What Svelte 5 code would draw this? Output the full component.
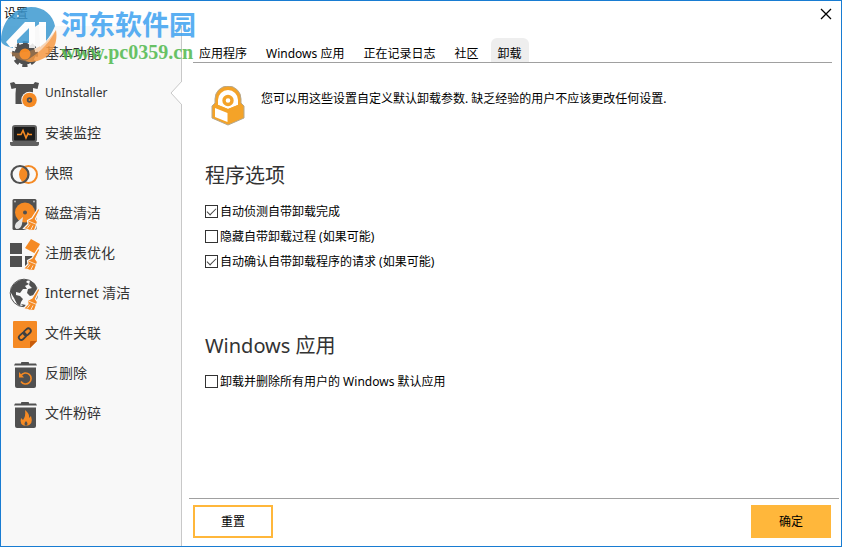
<script lang="ts">
  const sections = [
    { id: 'basic', label: '基本功能' },
    { id: 'uninstaller', label: 'UnInstaller' },
    { id: 'monitor', label: '安装监控' },
    { id: 'snapshot', label: '快照' },
    { id: 'disk', label: '磁盘清洁' },
    { id: 'registry', label: '注册表优化' },
    { id: 'internet', label: 'Internet 清洁' },
    { id: 'files', label: '文件关联' },
    { id: 'undelete', label: '反删除' },
    { id: 'shredder', label: '文件粉碎' },
  ]

  const tabs = ['应用程序', 'Windows 应用', '正在记录日志', '社区', '卸载']

  const defaults = {
    detect: true,
    hide: false,
    confirm: true,
    allUsers: false,
  }

  let section = $state('uninstaller')
  let tab = $state('卸载')
  let options = $state({ ...defaults })

  function reset() {
    options = { ...defaults }
  }
</script>

{#snippet broom()}
  <path
    d="M30 15.5 32 16.5 27.5 26 29.5 29 26.5 37.5 21 37 15.5 35.5 20 31 19.5 27.5 24 25Z"
    fill="#f58a24"
    stroke="#f8f8f8"
    stroke-width="1.2"
  />
  <path d="M20.5 28 28.5 31.5M19 35.5 22 31.5M23 36.5 25 32.5" stroke="#f8f8f8" stroke-width="0.8" />
{/snippet}

{#snippet icon(id: string)}
  <svg class="icon" viewBox="0 0 32 40" fill="none" aria-hidden="true">
    {#if id === 'basic'}
      <circle cx="17" cy="21" r="6.5" stroke="#505050" stroke-width="8" />
      <circle cx="17" cy="21" r="11" stroke="#505050" stroke-width="4" stroke-dasharray="5 3.64" stroke-dashoffset="2.5" />
      <circle cx="17" cy="21" r="5.5" fill="#f58a24" />
    {:else if id === 'uninstaller'}
      <path d="M2 10 6 9 7.5 11H25.5L27 9 31 10 29.5 16 25 15H8L3.5 16Z" fill="#505050" />
      <path d="M8 14.5H25V21L18 31H7.5V21Z" fill="#505050" />
      <circle cx="21.5" cy="27" r="8.3" fill="#f8f8f8" />
      <circle cx="21.5" cy="27" r="7.3" fill="#f58a24" />
      <circle cx="21.5" cy="27" r="1.8" fill="#f58a24" stroke="#505050" stroke-width="1.8" />
    {:else if id === 'monitor'}
      <rect x="5" y="13" width="23" height="15.5" rx="2" fill="#1c1c1c" stroke="#606060" stroke-width="2" />
      <path d="M2 29H31V31Q31 33 28 33H5Q2 33 2 31Z" fill="#606060" />
      <path d="M9 21.5H13L15 17.5 18 25 20 20.5 21 21.5H24" stroke="#f58a24" stroke-width="1.6" />
    {:else if id === 'snapshot'}
      <circle cx="20.5" cy="21.5" r="8.5" stroke="#f58a24" stroke-width="2" />
      <path d="M16.2 14.2A8.5 8.5 0 0 1 16.2 28.8 8.5 8.5 0 0 1 16.2 14.2Z" fill="#f58a24" />
      <circle cx="12" cy="21.5" r="8.5" stroke="#505050" stroke-width="2.2" />
    {:else if id === 'disk'}
      <rect x="4.5" y="6" width="24" height="31" rx="1.5" fill="#505050" />
      <circle cx="17" cy="19.5" r="10" fill="#f58a24" />
      <circle cx="17" cy="19.5" r="2" fill="#505050" />
      <path d="M15 24 14 31Q13 36 8.5 36 5.5 34 8 30Z" fill="#e4e4e4" />
      <circle cx="7" cy="8.5" r="0.9" fill="#c8c8c8" />
      <circle cx="26" cy="8.5" r="0.9" fill="#c8c8c8" />
      {@render broom()}
    {:else if id === 'registry'}
      <path d="M2 10H14V21H2ZM2 23H14V34H2ZM17 23H28V34H17Z" fill="#505050" />
      <path d="M23 6 32 11 27 20.5 17 15Z" fill="#f58a24" />
      {@render broom()}
    {:else if id === 'internet'}
      <circle cx="16" cy="20" r="13.8" fill="#f8f8f8" stroke="#505050" stroke-width="1" />
      <path d="M5 12 10 8 14 6.5 20 7 18 9 21 11 17 13 19 16 15 16 12 20 8 19 8 22 12 23 15 26 13 29 12 33 9 31 6 25 3 20 3 16Z" fill="#505050" />
      <path d="M22 7.5 27 11 29 16 30 21 28 26 26 22 22 23 19 20 20 16 24 15 21 12ZM13 31 18 32 16 34Z" fill="#505050" />
      {@render broom()}
    {:else if id === 'files'}
      <path d="M6 8H28Q29 8 29 9V28L22 35H6Q5 35 5 34V9Q5 8 6 8Z" fill="#f58a24" />
      <path d="M22 35V29Q22 28 23 28H29Z" fill="#c75c0b" />
      <g stroke="#404040" stroke-width="1.8" transform="rotate(-43 17 21)">
        <rect x="9.5" y="18.5" width="8" height="5" rx="2.5" />
        <rect x="16" y="18.5" width="8" height="5" rx="2.5" />
      </g>
    {:else}
      <path d="M13 9.5Q13 9 14 9H20Q21 9 21 9.5V10.5H28L29 12.5H6L7 10.5H13Z" fill="#505050" />
      <path d="M7 14.5H28V33Q28 35 26 35H9Q7 35 7 33Z" fill="#505050" />
      {#if id === 'undelete'}
        <path d="M13 22.5A5.5 5.5 0 1 1 13 28.5" stroke="#f58a24" stroke-width="1.6" />
        <path d="M11 19V24.5H16Z" fill="#f58a24" />
      {:else}
        <path d="M17 17Q22 21 21 25L23 23Q26 32 18 33 11 32 13 25L15 27Q18 23 17 17Z" fill="#f58a24" />
        <path d="M18 28Q21 31 18 33 15 31 18 28Z" fill="#505050" />
      {/if}
    {/if}
  </svg>
{/snippet}

<div class="window">
  <header class="titlebar">
    <span>设置</span>
    <button class="close" aria-label="关闭">
      <svg viewBox="0 0 12 12" aria-hidden="true">
        <path d="M1 1 11 11M11 1 1 11" stroke="#000" stroke-width="1.3" />
      </svg>
    </button>
  </header>

  <div class="body">
    <nav class="sidebar">
      {#each sections as item (item.id)}
        <button
          class="section"
          aria-current={section === item.id ? 'page' : undefined}
          onclick={() => (section = item.id)}
        >
          {@render icon(item.id)}
          <span>{item.label}</span>
          {#if section === item.id}
            <svg class="notch" viewBox="0 0 12 24" aria-hidden="true">
              <path d="M12 0 1 12 12 24" fill="#fff" stroke="#c8c8c8" />
            </svg>
          {/if}
        </button>
      {/each}
    </nav>

    <main>
      <div class="tabs" role="tablist">
        {#each tabs as name (name)}
          <button
            class="tab"
            class:active={tab === name}
            role="tab"
            aria-selected={tab === name}
            onclick={() => (tab = name)}
          >
            {name}
          </button>
        {/each}
      </div>

      <div class="panel">
        <div class="intro">
          <svg class="box-icon" viewBox="0 0 34 40" aria-hidden="true">
            <path d="M4 17V13A12 12 0 0 1 30 13V17L33 20V32L17 39 1 32V20Z" fill="#f4a328" stroke="#b5a78c" />
            <path d="M7 19V14A10 10 0 0 1 27 14V19L17 23Z" fill="#fff" />
            <circle cx="17" cy="14.5" r="4" fill="none" stroke="#f4a328" stroke-width="3.4" />
            <path d="M5 18 17 23 29 18 30 20 17 26 4 20Z" fill="#f4a328" />
            <path d="M4 22 16.5 27V36L4 31Z" fill="#fff" />
          </svg>
          <p>您可以用这些设置自定义默认卸载参数. 缺乏经验的用户不应该更改任何设置.</p>
        </div>

        <section>
          <h2>程序选项</h2>
          <label><input type="checkbox" bind:checked={options.detect} />自动侦测自带卸载完成</label>
          <label><input type="checkbox" bind:checked={options.hide} />隐藏自带卸载过程 (如果可能)</label>
          <label><input type="checkbox" bind:checked={options.confirm} />自动确认自带卸载程序的请求 (如果可能)</label>
        </section>

        <section>
          <h2>Windows 应用</h2>
          <label><input type="checkbox" bind:checked={options.allUsers} />卸载并删除所有用户的 Windows 默认应用</label>
        </section>
      </div>

      <footer>
        <button class="action outline" onclick={reset}>重置</button>
        <button class="action">确定</button>
      </footer>
    </main>
  </div>

  <div class="watermark">
    <svg viewBox="0 0 56 58" aria-hidden="true">
      <path d="M0 34C1 14 14 1 30 1 43 1 52 9 54 20 50 29 46 35 40 40V17L29 24V37H12V42C4 40 0 38 0 34Z" fill="#3d99d1" />
      <path d="M55 24C58 42 46 56 28 56L24 55C34 50 47 40 55 24Z" fill="#f69a45" />
      <path d="M9 46C27 49 43 42 55 24 51 41 40 51 24 55 18 54 12 51 9 46Z" fill="#f69a45" opacity="0.45" />
      <path d="M5 36 24 16H34V42H28V22L16 34V41H9ZM38 16H45V36L39 41Z" fill="#fff" />
      <circle cx="17" cy="10" r="1" fill="#fff" />
    </svg>
    <div class="site">
      <strong>河东软件园</strong>
      <span>www.pc0359.cn</span>
    </div>
  </div>
</div>

<style>
  :global(body) {
    margin: 0;
  }

  .window {
    position: relative;
    display: flex;
    flex-direction: column;
    box-sizing: border-box;
    min-height: 100vh;
    border: 1px solid #187cd2;
    background: #fff;
    color: #000;
    font: 12px/16px 'Noto Sans', 'Noto Sans CJK SC', sans-serif;
  }

  button {
    padding: 0;
    border: 0;
    background: none;
    color: inherit;
    font: inherit;
    cursor: pointer;
  }

  .titlebar {
    display: flex;
    justify-content: space-between;
    align-items: center;
    height: 25px;
    padding: 0 9px 0 3px;
  }

  .close {
    display: flex;

    & svg {
      width: 12px;
      height: 12px;
    }
  }

  .body {
    display: flex;
    flex: 1;
  }

  .sidebar {
    display: flex;
    flex-direction: column;
    flex: 0 0 180px;
    padding-top: 7px;
    border-right: 1px solid #c8c8c8;
    background: #f8f8f8;
    color: #333;
    font-size: 14px;
  }

  .section {
    position: relative;
    display: flex;
    align-items: center;
    gap: 5px;
    height: 40px;
    padding-left: 7px;

    &[aria-current] {
      font-size: 12px;
    }
  }

  .icon {
    width: 32px;
    height: 40px;
  }

  .notch {
    position: absolute;
    top: 8px;
    right: -1px;
    width: 12px;
    height: 24px;
  }

  main {
    display: flex;
    flex-direction: column;
    flex: 1;
    min-width: 0;
    padding-top: 12px;
  }

  .tabs {
    display: flex;
    gap: 5px;
    margin: 0 9px 0 11px;
    border-bottom: 1px solid #a0a0a0;
  }

  .tab {
    height: 24px;
    padding: 7px 8px 0 6px;
    border-radius: 6px 6px 0 0;

    &.active {
      background: #eee;
    }
  }

  .panel {
    flex: 1;
    padding: 23px 12px 16px 23px;
  }

  .intro {
    display: flex;
    gap: 16px;
    margin: 0 0 35px 6px;

    & p {
      margin: 5px 0 0;
    }
  }

  .box-icon {
    flex: none;
    width: 34px;
    height: 40px;
  }

  section + section {
    margin-top: 57px;
  }

  h2 {
    margin: 0 0 8px;
    color: #333;
    font-size: 20px;
    font-weight: 400;
    line-height: 30px;
  }

  label {
    display: flex;
    align-items: center;
    gap: 2px;
    width: fit-content;
    height: 25px;
  }

  input {
    appearance: none;
    display: grid;
    place-items: center;
    box-sizing: border-box;
    width: 13px;
    height: 13px;
    margin: 0;
    border: 1px solid #333;
    background: #fff;

    &:checked::after {
      content: '';
      width: 8px;
      height: 4px;
      margin-bottom: 3px;
      border: solid #444;
      border-width: 0 0 1px 1px;
      rotate: -45deg;
    }
  }

  footer {
    display: flex;
    justify-content: space-between;
    margin: 0 2px 0 7px;
    padding: 6px 8px 8px 4px;
    border-top: 1px solid #a0a0a0;
  }

  .action {
    box-sizing: border-box;
    width: 80px;
    height: 33px;
    border: 2px solid #ffb73b;
    background: #ffb73b;

    &.outline {
      background: #fff;
    }
  }

  .watermark {
    position: absolute;
    top: 5px;
    left: 0;
    display: flex;
    gap: 4px;
    opacity: 0.85;
    pointer-events: none;

    & svg {
      width: 56px;
      height: 58px;
    }
  }

  .site {
    display: flex;
    flex-direction: column;
    padding-top: 4px;

    & strong {
      color: #3ea2f0;
      font-size: 27px;
      line-height: 30px;
    }

    & span {
      color: #50b84c;
      font: bold 20px/24px 'Liberation Serif', serif;
    }
  }
</style>
